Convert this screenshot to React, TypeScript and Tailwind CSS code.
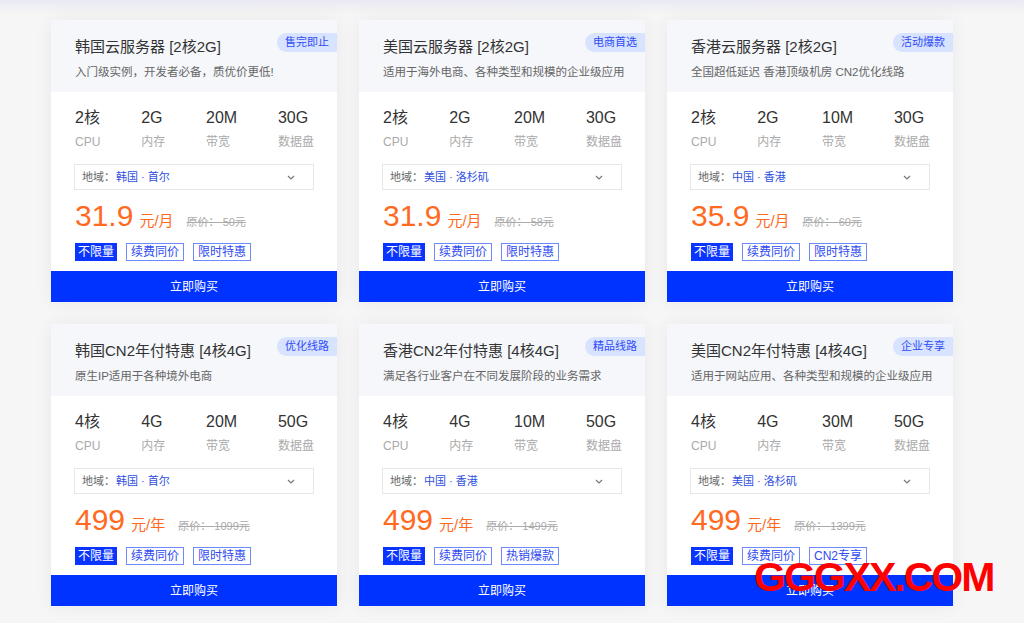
import React from "react";

type Plan = {
    title: string;
    badge: string;
    desc: string;
    specs: { value: string; label: string }[];
    region: string;
    price: string;
    unit: string;
    original: string;
    tags: string[];
};

const spec = (cpu: string, mem: string, bw: string, disk: string) => [
    { value: cpu, label: "CPU" },
    { value: mem, label: "内存" },
    { value: bw, label: "带宽" },
    { value: disk, label: "数据盘" },
];

const plans: Plan[] = [
    {
        title: "韩国云服务器 [2核2G]",
        badge: "售完即止",
        desc: "入门级实例，开发者必备，质优价更低!",
        specs: spec("2核", "2G", "20M", "30G"),
        region: "韩国 · 首尔",
        price: "31.9",
        unit: "元/月",
        original: "50元",
        tags: ["续费同价", "限时特惠"],
    },
    {
        title: "美国云服务器 [2核2G]",
        badge: "电商首选",
        desc: "适用于海外电商、各种类型和规模的企业级应用",
        specs: spec("2核", "2G", "20M", "30G"),
        region: "美国 · 洛杉矶",
        price: "31.9",
        unit: "元/月",
        original: "58元",
        tags: ["续费同价", "限时特惠"],
    },
    {
        title: "香港云服务器 [2核2G]",
        badge: "活动爆款",
        desc: "全国超低延迟 香港顶级机房 CN2优化线路",
        specs: spec("2核", "2G", "10M", "30G"),
        region: "中国 · 香港",
        price: "35.9",
        unit: "元/月",
        original: "60元",
        tags: ["续费同价", "限时特惠"],
    },
    {
        title: "韩国CN2年付特惠 [4核4G]",
        badge: "优化线路",
        desc: "原生IP适用于各种境外电商",
        specs: spec("4核", "4G", "20M", "50G"),
        region: "韩国 · 首尔",
        price: "499",
        unit: "元/年",
        original: "1099元",
        tags: ["续费同价", "限时特惠"],
    },
    {
        title: "香港CN2年付特惠 [4核4G]",
        badge: "精品线路",
        desc: "满足各行业客户在不同发展阶段的业务需求",
        specs: spec("4核", "4G", "10M", "50G"),
        region: "中国 · 香港",
        price: "499",
        unit: "元/年",
        original: "1499元",
        tags: ["续费同价", "热销爆款"],
    },
    {
        title: "美国CN2年付特惠 [4核4G]",
        badge: "企业专享",
        desc: "适用于网站应用、各种类型和规模的企业级应用",
        specs: spec("4核", "4G", "30M", "50G"),
        region: "美国 · 洛杉矶",
        price: "499",
        unit: "元/年",
        original: "1399元",
        tags: ["续费同价", "CN2专享"],
    },
];

const font = "font-['Liberation_Sans','Noto_Sans_CJK_SC',sans-serif]";

const PlanCard = ({ plan }: { plan: Plan }) => (
    <div className="w-[286px] bg-white shadow-[0_0_18px_rgba(0,0,0,0.06)] flex flex-col">
        <div className="bg-[#f5f7fa] h-[72px] pl-6 pt-[15px] flex flex-col relative">
            <h3 className="text-[15px] leading-6 text-[#333]">{plan.title}</h3>
            <p className="text-[11.5px] leading-[18px] text-[#666] mt-1">{plan.desc}</p>
            <span className="absolute right-0 top-[13px] h-[19px] px-[8px] rounded-l-full bg-[#d8e4ff] text-[#2f4bf5] text-[11px] leading-[19px]">
                {plan.badge}
            </span>
        </div>
        <div className="px-[23px] pt-[14px] flex flex-col">
            <div className="flex justify-between pl-px">
                {plan.specs.map((s, i) => (
                    <div key={i} className="flex flex-col">
                        <span className="text-[16px] leading-6 text-[#333]">{s.value}</span>
                        <span className="text-[12px] leading-[18px] text-[#aaa] mt-[3px]">{s.label}</span>
                    </div>
                ))}
            </div>
            <div className="mt-[13px] h-[26px] border border-[#e8e8e8] flex items-center pl-[7px] pr-[18px] text-[11px]">
                <span className="text-[#666]">地域：</span>
                <span className="text-[#3050e0] ml-[1px]">{plan.region}</span>
                <svg className="ml-auto" width="8" height="5" viewBox="0 0 8 5" fill="none">
                    <path d="M1 1l3 3 3-3" stroke="#777" strokeWidth="1.2" />
                </svg>
            </div>
            <div className="mt-[9px] flex items-baseline h-[34px] pl-px">
                <span className="text-[30px] leading-[34px] text-[#ff6a1f]">{plan.price}</span>
                <span className="text-[15px] text-[#ff6a1f] ml-[6px]">{plan.unit}</span>
                <span className="text-[11px] text-[#aaa] line-through ml-[13px] whitespace-pre">原价： {plan.original}</span>
            </div>
            <div className="mt-[10px] flex gap-[9px] pl-px">
                <span className="h-[18px] px-[2px] bg-[#0a35ff] border border-[#0a35ff] text-white text-[12px] leading-[16px]">不限量</span>
                {plan.tags.map((t, i) => (
                    <span key={i} className="h-[18px] px-[4px] border border-[#6d8bff] text-[#2f4bf0] text-[12px] leading-[16px]">
                        {t}
                    </span>
                ))}
            </div>
        </div>
        <button className="mt-[10px] h-[31px] bg-[#0033ff] text-white text-[12px]">立即购买</button>
    </div>
);

export default function App() {
    return (
        <div className={`${font} relative min-h-[623px] bg-[linear-gradient(#e9e9f2,#f6f6f6_14px,#f6f6f6)] pt-5 pl-[51px]`}>
            <div className="grid grid-cols-[repeat(3,286px)] gap-x-[22px] gap-y-[22px]">
                {plans.map((p, i) => (
                    <PlanCard key={i} plan={p} />
                ))}
            </div>
            <div className="absolute left-[754px] top-[549px] text-[41px] font-bold text-[#ff0000] tracking-[-2px] leading-[56px]">
                GGGXX.COM
            </div>
        </div>
    );
}
